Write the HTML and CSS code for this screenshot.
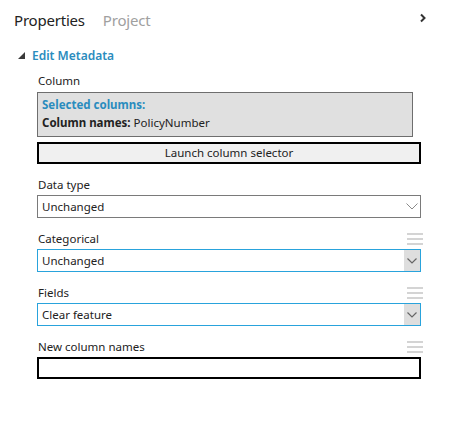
FILE: index.html
```html
<!DOCTYPE html>
<html>
<head>
<meta charset="utf-8">
<link rel="stylesheet" href="styles.css">
</head>
<body>
<div class="panel">
  <div class="tabs">
    <span class="tab active">Properties</span>
    <span class="tab">Project</span>
    <svg class="collapse" width="8" height="10" viewBox="0 0 8 10"><path d="M2 1.5 L5.5 5 L2 8.5" fill="none" stroke="#333" stroke-width="2"/></svg>
  </div>
  <div class="section-head">
    <svg class="tri" width="7" height="7" viewBox="0 0 7 7"><path d="M7 0 L7 7 L0 7 Z" fill="#3a3a3a"/></svg>
    <span>Edit Metadata</span>
  </div>
  <div class="fields">
    <div class="field">
      <div class="label">Column</div>
      <div class="selbox">
        <div class="sel-title">Selected columns:</div>
        <div class="sel-line"><b>Column names:</b> PolicyNumber</div>
      </div>
      <button class="launch">Launch column selector</button>
    </div>
    <div class="field">
      <div class="label">Data type</div>
      <div class="select">
        <span>Unchanged</span>
        <span class="arrow"><svg width="12" height="7" viewBox="0 0 12 7"><path d="M0.5 0.5 L6 6 L11.5 0.5" fill="none" stroke="#8a8a8a" stroke-width="1"/></svg></span>
      </div>
    </div>
    <div class="field">
      <div class="label">Categorical<span class="grip"></span></div>
      <div class="select active">
        <span>Unchanged</span>
        <span class="arrow"><svg width="10" height="6" viewBox="0 0 10 6"><path d="M0.5 0.5 L5 5 L9.5 0.5" fill="none" stroke="#666" stroke-width="1.2"/></svg></span>
      </div>
    </div>
    <div class="field">
      <div class="label">Fields<span class="grip"></span></div>
      <div class="select active">
        <span>Clear feature</span>
        <span class="arrow"><svg width="10" height="6" viewBox="0 0 10 6"><path d="M0.5 0.5 L5 5 L9.5 0.5" fill="none" stroke="#666" stroke-width="1.2"/></svg></span>
      </div>
    </div>
    <div class="field">
      <div class="label">New column names<span class="grip"></span></div>
      <div class="textbox"></div>
    </div>
  </div>
</div>
</body>
</html>
```
FILE: styles.css
```css
html, body {
  margin: 0;
  padding: 0;
  background: #fff;
}
body {
  font-family: "Noto Sans", "Open Sans", sans-serif;
  color: #222;
  width: 469px;
  height: 436px;
}
.panel {
  padding: 10px 0 0 0;
}
.tabs {
  display: flex;
  align-items: center;
  height: 20px;
  padding-left: 14px;
}
.tab {
  font-size: 15px;
  line-height: 20px;
  color: #a0a0a0;
  margin-right: 18px;
  letter-spacing: -0.2px;
}
.tab.active {
  color: #222;
}
.collapse {
  margin-left: auto;
  margin-right: 42px;
  margin-top: -4px;
}
.section-head {
  display: flex;
  align-items: center;
  margin-top: 16px;
  height: 18px;
  padding-left: 18px;
  font-size: 12px;
  font-weight: 600;
  color: #2a8cbe;
}
.tri {
  margin-right: 7px;
  margin-top: 1px;
}
.fields {
  display: flex;
  flex-direction: column;
  gap: 12px;
  margin-top: 8px;
  padding-left: 37px;
  width: 384px;
}
.field {
  display: flex;
  flex-direction: column;
}
.label {
  font-size: 11.5px;
  line-height: 18px;
  height: 18px;
  padding-left: 1px;
  margin-bottom: 1px;
  color: #222;
  position: relative;
}
.grip {
  position: absolute;
  right: -2px;
  top: 3px;
  width: 16px;
  height: 12px;
  background: linear-gradient(#d4d4d4 0 2px, transparent 2px 5px, #d4d4d4 5px 7px, transparent 7px 10px, #d4d4d4 10px 12px);
}
.selbox {
  margin-top: 1px;
  border: 1px solid #6e6e6e;
  background: #e0e0e0;
  padding: 3px 0 0 4px;
  box-sizing: border-box;
  height: 45px;
  width: 376px;
  font-size: 11.5px;
  line-height: 18px;
}
.sel-title {
  color: #2a8cbe;
  font-weight: 700;
}
.sel-line b {
  font-weight: 700;
}
.launch {
  margin-top: 5px;
  height: 22px;
  width: 384px;
  border: 2px solid #000;
  background: #f0f0f0;
  font-family: inherit;
  font-size: 11.5px;
  color: #222;
  padding: 0;
  line-height: 18px;
}
.select {
  height: 23px;
  box-sizing: border-box;
  border: 1px solid #7a7a7a;
  display: flex;
  align-items: center;
  font-size: 11.5px;
  padding-left: 4px;
}
.select.active {
  border-color: #29a3dc;
}
.select .arrow {
  margin-left: auto;
  width: 16px;
  height: 100%;
  display: flex;
  align-items: center;
  justify-content: center;
}
.select.active .arrow {
  background: #dedede;
}
.textbox {
  height: 22px;
  box-sizing: border-box;
  border: 2px solid #000;
}
```
